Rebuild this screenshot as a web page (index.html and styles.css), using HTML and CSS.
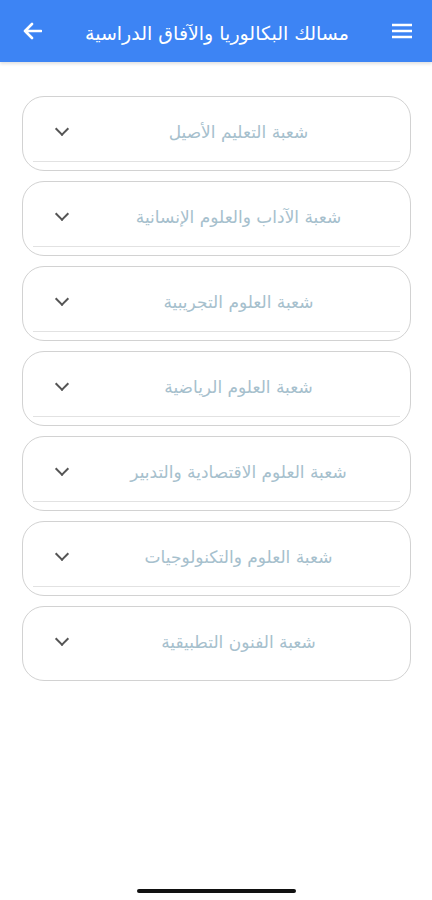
FILE: index.html
```html
<!DOCTYPE html>
<html lang="ar" dir="rtl">
<head>
    <meta charset="UTF-8">
    <meta name="viewport" content="width=device-width, initial-scale=1.0">
    <title>مسالك البكالوريا والآفاق الدراسية</title>
    <link rel="stylesheet" href="styles.css">
</head>
<body>
    <div class="app">
        <header class="appbar">
            <button class="icon-btn" aria-label="menu">
                <svg width="20" height="16" viewBox="0 0 20 16"><path d="M0 2h20M0 8h20M0 14h20" stroke="#fff" stroke-width="2.4"/></svg>
            </button>
            <h1 class="title">مسالك البكالوريا والآفاق الدراسية</h1>
            <button class="icon-btn" aria-label="back">
                <svg width="20" height="18" viewBox="0 0 20 18"><path d="M19 9H3M10 2L3 9l7 7" stroke="#fff" stroke-width="2.6" fill="none" stroke-linecap="round" stroke-linejoin="round"/></svg>
            </button>
        </header>

        <main class="list">
            <div class="tile"><div class="tile-head"><span class="tile-text">شعبة التعليم الأصيل</span><span class="chev"></span></div></div>
            <div class="tile"><div class="tile-head"><span class="tile-text">شعبة الآداب والعلوم الإنسانية</span><span class="chev"></span></div></div>
            <div class="tile"><div class="tile-head"><span class="tile-text">شعبة العلوم التجريبية</span><span class="chev"></span></div></div>
            <div class="tile"><div class="tile-head"><span class="tile-text">شعبة العلوم الرياضية</span><span class="chev"></span></div></div>
            <div class="tile"><div class="tile-head"><span class="tile-text">شعبة العلوم الاقتصادية والتدبير</span><span class="chev"></span></div></div>
            <div class="tile"><div class="tile-head"><span class="tile-text">شعبة العلوم والتكنولوجيات</span><span class="chev"></span></div></div>
            <div class="tile last"><div class="tile-head"><span class="tile-text">شعبة الفنون التطبيقية</span><span class="chev"></span></div></div>
        </main>

        <div class="home-bar"></div>
    </div>
</body>
</html>
```

FILE: styles.css
```css
body {
    margin: 0;
    background: #fff;
    font-family: "DejaVu Sans", "Noto Sans", sans-serif;
}

.app {
    width: 432px;
    height: 900px;
    display: flex;
    flex-direction: column;
}

.appbar {
    height: 62px;
    background: #3d84f4;
    display: flex;
    align-items: center;
    padding: 0 10px 0 12px;
    box-shadow: 0 2px 3px rgba(0, 0, 0, 0.12);
    flex-shrink: 0;
}

.icon-btn {
    background: none;
    border: none;
    padding: 0;
    width: 40px;
    height: 40px;
    display: flex;
    align-items: center;
    justify-content: center;
}

.title {
    flex: 1;
    margin: 0;
    padding-top: 4px;
    text-align: center;
    color: #fff;
    font-size: 19px;
    font-weight: normal;
}

.list {
    flex: 1;
    padding: 34px 21px 0 22px;
    display: flex;
    flex-direction: column;
    gap: 10px;
}

.tile {
    height: 75px;
    border: 1px solid #d2d2d2;
    border-radius: 22px;
    box-sizing: border-box;
    overflow: hidden;
}

.tile-head {
    height: 64px;
    margin: 0 10px;
    border-bottom: 1px solid #e2e2e2;
    display: flex;
    align-items: center;
    padding: 0 6px 0 24px;
}

.tile.last .tile-head {
    border-bottom: none;
}

.tile-text {
    flex: 1;
    padding-top: 6px;
    text-align: center;
    color: #a6c0cd;
    font-size: 17px;
}

.chev {
    width: 8px;
    height: 8px;
    border-right: 2px solid #555;
    border-bottom: 2px solid #555;
    transform: rotate(45deg);
    margin: 0 16px 0 0;
}

.home-bar {
    width: 159px;
    height: 4px;
    background: #111;
    border-radius: 2px;
    margin: 0 auto 7px;
}
```
